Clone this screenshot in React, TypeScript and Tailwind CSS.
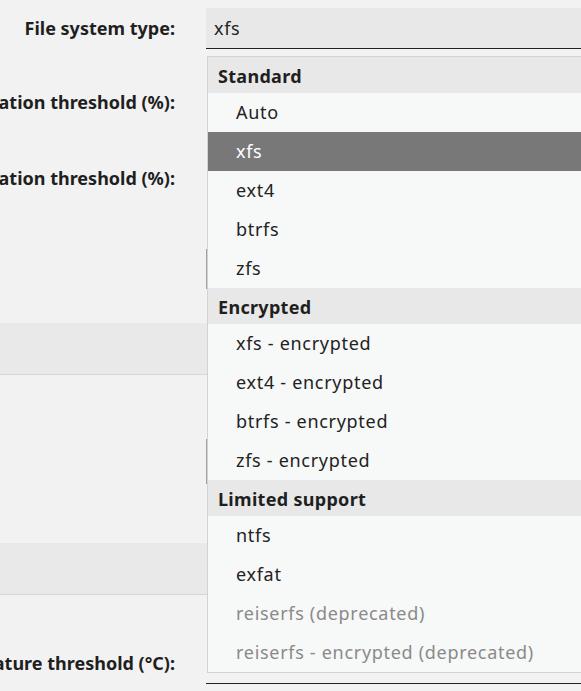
import React from "react";

type Option = { label: string; selected?: boolean; disabled?: boolean };
type Group = { title: string; options: Option[] };

const groups: Group[] = [
  {
    title: "Standard",
    options: [
      { label: "Auto" },
      { label: "xfs", selected: true },
      { label: "ext4" },
      { label: "btrfs" },
      { label: "zfs" },
    ],
  },
  {
    title: "Encrypted",
    options: [
      { label: "xfs - encrypted" },
      { label: "ext4 - encrypted" },
      { label: "btrfs - encrypted" },
      { label: "zfs - encrypted" },
    ],
  },
  {
    title: "Limited support",
    options: [
      { label: "ntfs" },
      { label: "exfat" },
      { label: "reiserfs (deprecated)", disabled: true },
      { label: "reiserfs - encrypted (deprecated)", disabled: true },
    ],
  },
];

function Label({ children }: { children: React.ReactNode }) {
  return (
    <div className="w-[175px] shrink-0 flex justify-end overflow-hidden">
      <span className="whitespace-nowrap font-bold text-[18px] text-[#1f1f1f]">{children}</span>
    </div>
  );
}

export default function App() {
  return (
    <div
      className="relative w-[581px] h-[691px] overflow-hidden bg-[#f2f2f2]"
      style={{ fontFamily: '"Noto Sans", "Open Sans", sans-serif' }}
    >
      {/* Settings form */}
      <div className="flex flex-col pt-2">
        <div className="flex items-center gap-[31px] h-[41px]">
          <Label>File system type:</Label>
          <div className="flex-1 h-[41px] bg-[#e8e8e8] border-b border-[#222] flex items-center pl-2 text-[18px] tracking-[0.7px] text-[#222]">
            xfs
          </div>
        </div>

        <div className="flex items-center h-[35px] mt-[36px]">
          <Label>Warning utilization threshold (%):</Label>
        </div>
        <div className="flex items-center h-[35px] mt-[41px]">
          <Label>Critical utilization threshold (%):</Label>
        </div>

        <div className="flex h-[40px] mt-[53px]">
          <div className="w-[206px]" />
          <div className="w-px bg-[#a0a0a0]" />
        </div>

        <div className="h-[52px] mt-[34px] bg-[#e9e9e9] border-b border-[#d6d6d6]" />

        <div className="flex h-[45px] mt-[64px]">
          <div className="w-[206px]" />
          <div className="w-px bg-[#a0a0a0]" />
        </div>

        <div className="h-[52px] mt-[59px] bg-[#e9e9e9] border-b border-[#d6d6d6]" />

        <div className="flex items-center gap-[31px] h-[44px] mt-[47px] pb-[2px]">
          <Label>Warning disk temperature threshold (°C):</Label>
          <div className="flex-1 h-[42px] border-b border-[#222]" />
        </div>
      </div>

      {/* Open option list */}
      <div className="absolute left-[207px] top-[56px] w-[390px] border border-[#d2d2d2] bg-[#f7f8f8] text-[18px]">
        {groups.map((g) => (
          <div key={g.title}>
            <div className="h-[36px] bg-[#e8e8e8] flex items-center pl-[10px] pt-[3px] font-bold tracking-[0.3px] text-[#1f1f1f]">
              {g.title}
            </div>
            {g.options.map((o) => (
              <div
                key={o.label}
                className={
                  o.selected
                    ? "h-[39px] flex items-center pl-[28px] tracking-[0.7px] bg-[#787878] text-white"
                    : o.disabled
                    ? "h-[39px] flex items-center pl-[28px] tracking-[0.7px] text-[#8a8a8a]"
                    : "h-[39px] flex items-center pl-[28px] tracking-[0.7px] text-[#222]"
                }
              >
                {o.label}
              </div>
            ))}
          </div>
        ))}
      </div>
    </div>
  );
}
